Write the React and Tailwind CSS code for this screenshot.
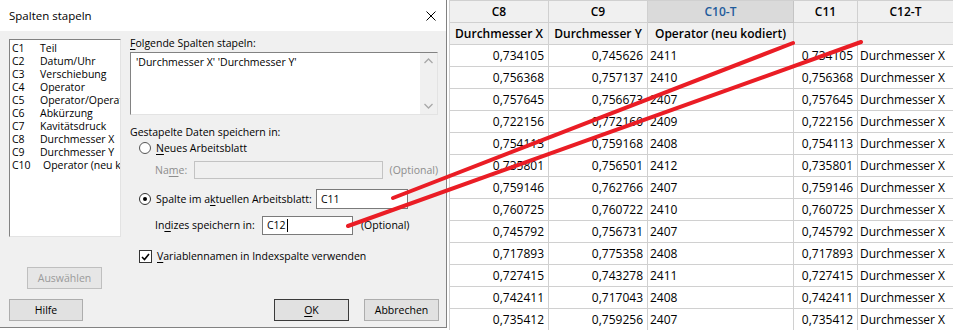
import React from "react";

const listItems = [
  ["C1", "Teil"],
  ["C2", "Datum/Uhr"],
  ["C3", "Verschiebung"],
  ["C4", "Operator"],
  ["C5", "Operator/Operator"],
  ["C6", "Abkürzung"],
  ["C7", "Kavitätsdruck"],
  ["C8", "Durchmesser X"],
  ["C9", "Durchmesser Y"],
  ["C10", "Operator (neu kodiert)"],
];

const rows = [
  ["0,734105", "0,745626", "2411"],
  ["0,756368", "0,757137", "2410"],
  ["0,757645", "0,756673", "2407"],
  ["0,722156", "0,772160", "2409"],
  ["0,754113", "0,759168", "2408"],
  ["0,735801", "0,756501", "2412"],
  ["0,759146", "0,762766", "2407"],
  ["0,760725", "0,760722", "2410"],
  ["0,745792", "0,756731", "2407"],
  ["0,717893", "0,775358", "2408"],
  ["0,727415", "0,743278", "2411"],
  ["0,742411", "0,717043", "2408"],
  ["0,735412", "0,759256", "2407"],
];

function Btn({ children, className = "", disabled = false, def = false }) {
  return (
    <div
      className={
        "h-[22px] flex items-center justify-center bg-[#e1e1e1] border " +
        (def ? "border-[#3a3a3a] " : "border-[#adadad] ") +
        (disabled ? "text-[#9a9a9a] bg-[#e6e6e6] border-[#bfbfbf] " : "text-black ") +
        className
      }
    >
      {children}
    </div>
  );
}

function Radio({ checked }) {
  return (
    <div
      className={
        "w-[12px] h-[12px] rounded-full bg-white border flex items-center justify-center " +
        (checked ? "border-[#333333]" : "border-[#555555]")
      }
    >
      {checked && <div className="w-[4px] h-[4px] rounded-full bg-black" />}
    </div>
  );
}

function Field({ children, className = "", disabled = false }) {
  return (
    <div
      className={
        "border flex items-center pl-[4px] " +
        (disabled ? "bg-[#f0f0f0] border-[#c3c3c3] " : "bg-white border-[#7a7a7a] ") +
        className
      }
    >
      {children}
    </div>
  );
}

function U({ children }) {
  return <span className="underline underline-offset-[2px]">{children}</span>;
}

export default function App() {
  const dialogFont = { fontFamily: '"Open Sans", "Noto Sans", sans-serif' };
  return (
    <div className="relative w-[953px] h-[330px] overflow-hidden bg-white flex">
      {/* Dialog */}
      <div
        className="w-[447px] h-[328px] flex flex-col bg-[#f0f0f0] border-r border-b border-[#828282] text-[10.5px] leading-[13px] text-black"
        style={dialogFont}
      >
        <div className="h-[31px] bg-white flex items-center justify-between pl-[9px] pr-[10px] shrink-0">
          <span className="text-[11.5px]">Spalten stapeln</span>
          <svg width="10" height="10" viewBox="0 0 10 10">
            <path d="M0.5 0.5 L9.5 9.5 M9.5 0.5 L0.5 9.5" stroke="#000" strokeWidth="1" />
          </svg>
        </div>
        <div className="flex-1 flex flex-col pl-[9px] pr-[7px] pt-[5px]">
          <div className="flex gap-[9px]">
            {/* left column */}
            <div className="w-[112px] flex flex-col">
              <div className="mt-[3px] h-[198px] bg-white border border-t-[#828282] border-l-[#828282] border-r-[#e3e3e3] border-b-[#e3e3e3] pt-[2px] pl-[2px] overflow-hidden">
                {listItems.map(([c, n]) => (
                  <div key={c} className="flex h-[13px] items-center whitespace-nowrap">
                    <span className="w-[28px] shrink-0">{c}</span>
                    <span className={c === "C10" ? "pl-[3px]" : ""}>{n}</span>
                  </div>
                ))}
              </div>
              <Btn disabled className="mt-[30px] ml-[18px] w-[75px]">Auswählen</Btn>
            </div>
            {/* right column */}
            <div className="w-[308px] flex flex-col">
              <div className="h-[15px] flex items-center">
                <span><U>F</U>olgende Spalten stapeln:</span>
              </div>
              <div className="mt-[1px] h-[63px] bg-white border border-t-[#828282] border-l-[#828282] border-r-[#e3e3e3] border-b-[#e3e3e3] flex">
                <div className="flex-1 pl-[5px] pt-[3px]">'Durchmesser X' 'Durchmesser Y'</div>
                <div className="w-[17px] bg-[#f0f0f0] flex flex-col items-center justify-between py-[5px]">
                  <svg width="9" height="6" viewBox="0 0 9 6">
                    <path d="M0.5 5 L4.5 1 L8.5 5" stroke="#a8a8a8" strokeWidth="1.3" fill="none" />
                  </svg>
                  <svg width="9" height="6" viewBox="0 0 9 6">
                    <path d="M0.5 1 L4.5 5 L8.5 1" stroke="#a8a8a8" strokeWidth="1.3" fill="none" />
                  </svg>
                </div>
              </div>
              <div className="mt-[10px] h-[15px] flex items-center">Gestapelte Daten speichern in:</div>
              <div className="h-[16px] flex items-center pl-[9px] gap-[5px]">
                <Radio />
                <span><U>N</U>eues Arbeitsblatt</span>
              </div>
              <div className="mt-[5px] h-[18px] flex items-center pl-[25px]">
                <span className="w-[40px] text-[#8d8d8d]">Na<U>m</U>e:</span>
                <Field disabled className="w-[194px] h-[18px]" />
                <span className="ml-[7px] text-[#8d8d8d]">(Optional)</span>
              </div>
              <div className="mt-[10px] h-[20px] flex items-center pl-[9px]">
                <Radio checked />
                <span className="ml-[5px] w-[160px]">Spalte im a<U>k</U>tuellen Arbeitsblatt:</span>
                <Field className="w-[92px] h-[20px]">C11</Field>
              </div>
              <div className="mt-[7px] h-[19px] flex items-center pl-[25px]">
                <span className="w-[107px]">In<U>d</U>izes speichern in:</span>
                <Field className="w-[91px] h-[19px]">
                  C12<span className="inline-block w-[1px] h-[13px] bg-black ml-[1px]" />
                </Field>
                <span className="ml-[8px]">(Optional)</span>
              </div>
              <div className="mt-[15px] h-[13px] flex items-center pl-[9px] gap-[5px]">
                <div className="w-[13px] h-[13px] bg-white border border-[#333333] flex items-center justify-center">
                  <svg width="9" height="8" viewBox="0 0 9 8">
                    <path d="M1 4 L3.5 6.5 L8 1" stroke="#000" strokeWidth="1.6" fill="none" />
                  </svg>
                </div>
                <span><U>V</U>ariablennamen in Indexspalte verwenden</span>
              </div>
            </div>
          </div>
          <div className="mt-[10px] flex items-center">
            <Btn className="w-[74px]">Hilfe</Btn>
            <div className="flex-1" />
            <Btn def className="w-[75px]"><U>O</U>K</Btn>
            <Btn className="w-[75px] ml-[15px]">Abbrechen</Btn>
          </div>
        </div>
      </div>

      {/* Worksheet */}
      <div
        className="flex-1 pl-[2px] text-[12px] text-black"
        style={{ fontFamily: '"Open Sans", "Noto Sans", sans-serif' }}
      >
        <div className="grid grid-cols-[99px_99px_146px_64px_1fr] border-l border-t border-[#d0d0d0]">
          {/* header row 1 */}
          <div className="h-[22px] border-r border-b border-[#d0d0d0] bg-[#f0f0f0] flex items-center justify-center font-semibold">C8</div>
          <div className="h-[22px] border-r border-b border-[#d0d0d0] bg-[#f0f0f0] flex items-center justify-center font-semibold">C9</div>
          <div className="h-[22px] border-r border-b border-[#c4c4c4] bg-[#dadada] flex items-center justify-center font-semibold text-[#1f5c9c]">C10-T</div>
          <div className="h-[22px] border-r border-b border-[#d0d0d0] bg-[#f0f0f0] flex items-center justify-center font-semibold">C11</div>
          <div className="h-[22px] border-b border-[#d0d0d0] bg-[#f0f0f0] flex items-center justify-center font-semibold">C12-T</div>
          {/* header row 2 */}
          <div className="h-[22px] border-r border-b border-[#d0d0d0] bg-[#f0f0f0] flex items-center justify-center font-semibold whitespace-nowrap">Durchmesser X</div>
          <div className="h-[22px] border-r border-b border-[#d0d0d0] bg-[#f0f0f0] flex items-center justify-center font-semibold whitespace-nowrap">Durchmesser Y</div>
          <div className="h-[22px] border-r border-b border-[#d0d0d0] bg-[#f0f0f0] flex items-center justify-center font-semibold whitespace-nowrap">Operator (neu kodiert)</div>
          <div className="h-[22px] border-r border-b border-[#d0d0d0] bg-[#f0f0f0]" />
          <div className="h-[22px] border-b border-[#d0d0d0] bg-[#f0f0f0]" />
          {rows.map((r, i) => (
            <React.Fragment key={i}>
              <div className="h-[22px] border-r border-b border-[#d0d0d0] flex items-center justify-end pr-[4px]">{r[0]}</div>
              <div className="h-[22px] border-r border-b border-[#d0d0d0] flex items-center justify-end pr-[4px]">{r[1]}</div>
              <div className="h-[22px] border-r border-b border-[#d0d0d0] flex items-center pl-[2px]">{r[2]}</div>
              <div className="h-[22px] border-r border-b border-[#d0d0d0] flex items-center justify-end pr-[4px]">{r[0]}</div>
              <div className="h-[22px] border-b border-[#d0d0d0] flex items-center pl-[2px] whitespace-nowrap">Durchmesser X</div>
            </React.Fragment>
          ))}
        </div>
      </div>

      {/* red annotation lines */}
      <svg className="absolute inset-0 pointer-events-none" width="953" height="330" viewBox="0 0 953 330">
        <line x1="393" y1="198" x2="793" y2="43" stroke="#ea1d25" strokeWidth="4" strokeLinecap="round" />
        <line x1="348" y1="226" x2="861" y2="42" stroke="#ea1d25" strokeWidth="4" strokeLinecap="round" />
      </svg>
    </div>
  );
}
